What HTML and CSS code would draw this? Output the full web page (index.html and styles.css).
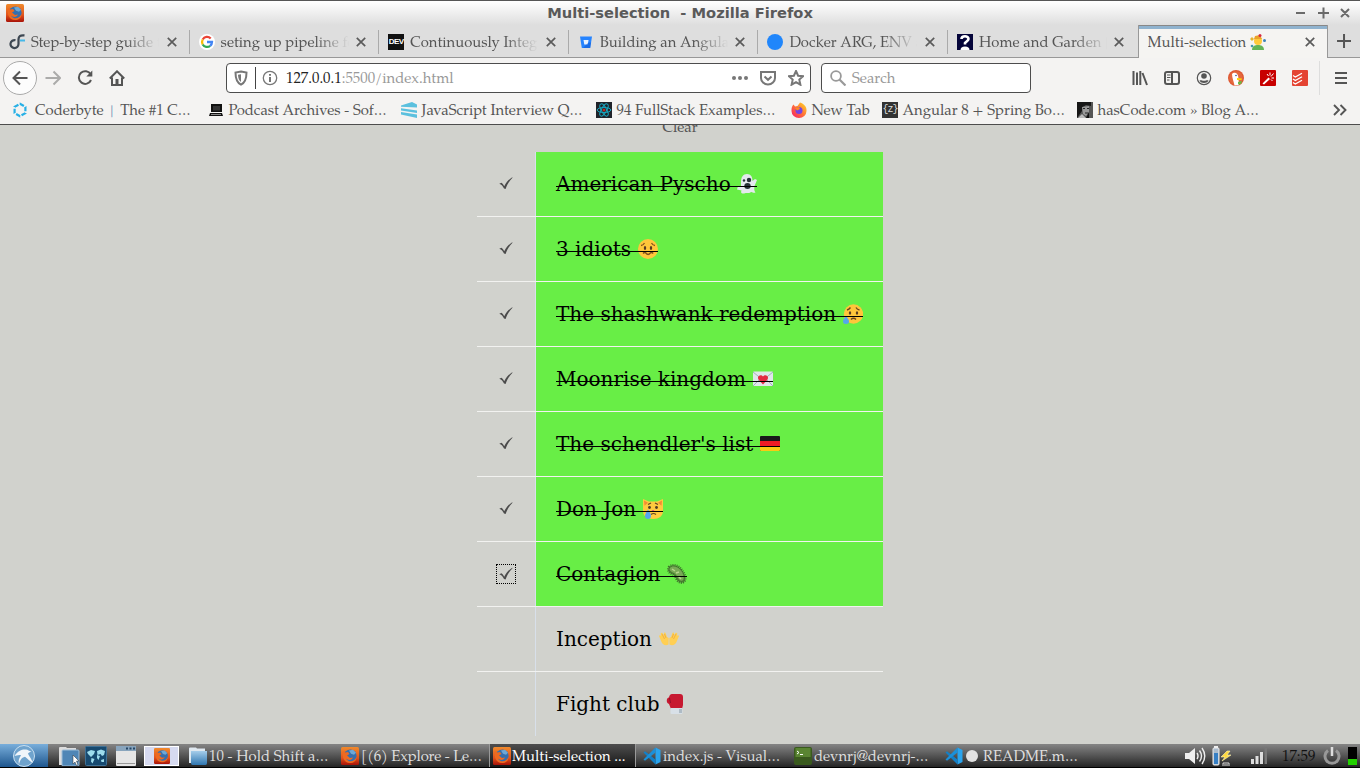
FILE: index.html
```html
<!DOCTYPE html>
<html lang="en">
<head>
<meta charset="utf-8">
<title>Multi-selection</title>
<link rel="stylesheet" href="styles.css">
</head>
<body>
<svg class="defs" width="0" height="0">
  <defs>
    <linearGradient id="ffbg" x2="0" y2="1"><stop offset="0" stop-color="#f08a2c"/><stop offset=".6" stop-color="#e2541c"/><stop offset="1" stop-color="#a81208"/></linearGradient>
    <linearGradient id="blu" x2="0" y2="1"><stop offset="0" stop-color="#a5cdea"/><stop offset="1" stop-color="#2f76b0"/></linearGradient>
    <linearGradient id="ffnew" x1="1" x2="0" y2="1"><stop offset="0" stop-color="#ffe226"/><stop offset=".5" stop-color="#ff7139"/><stop offset="1" stop-color="#f5156c"/></linearGradient>
  </defs>
  <symbol id="fox" viewBox="0 0 18 18"><rect width="18" height="18" rx="1.5" fill="url(#ffbg)"/><circle cx="9.3" cy="8.8" r="6.3" fill="#356fae"/><path d="M8 3.5l4-.8 3 3-2 2-3-1z" fill="#6da8d6"/><path d="M2 4l2 1.500L7 5l1.500 2L6 8.500l3 2.500 3-.5c-1 3-5 3-7 1 2 4 8 4 10.500-1.500 0 4-3 6-6.500 6C3 16 .8 10 2 4z" fill="#ee6a20"/></symbol>
  <symbol id="x" viewBox="0 0 10 10"><path d="M.8.8l8.400 8.400M9.200.8L.8 9.200" stroke="#5b5b5b" stroke-width="1.700"/></symbol>
  <symbol id="tick" viewBox="0 0 14 13"><path d="M.3 6.800l2.200-1c1.200.8 2 2 2.700 3.400C7.300 5.500 9.800 2.300 13.200.2l.3.6C10.500 3.600 8 7.500 6.600 12L5 11.600C4 9.300 2.500 7.500.3 6.800z" fill="#4b4b4b"/></symbol>
  <symbol id="vs" viewBox="0 0 18 18"><path d="M12.500.5L17.500 3v12l-5 2.500z" fill="#29a4ee"/><path d="M.5 5.500L2 4.300l10.500 8.200v5z" fill="#1280c8"/><path d="M.5 12.500L2 13.700 12.500 5.500v-5z" fill="#1a90da"/></symbol>
</svg>

<header class="titlebar">
  <svg class="i18"><use href="#fox"/></svg>
  <h1 class="window-title">Multi-selection&nbsp; - Mozilla Firefox</h1>
  <svg class="winbtns" viewBox="0 0 56 12"><path d="M1 6h9M23 6h11M28.500.5v11M46 2l8 8M54 2l-8 8" stroke="#6a6a6a" stroke-width="2" fill="none"/></svg>
</header>

<nav class="tabs">
  <div class="tab"><svg class="i16" viewBox="0 0 16 16"><path d="M9.500 4.500V10a4 4 0 1 1-3-3.800M9.500 6c0-4 1.500-5 6-4.600" fill="none" stroke="#3d4752" stroke-width="2.200"/><path d="M11 6.500h5" stroke="#45b8e8" stroke-width="2"/></svg><span class="label">Step-by-step guide t</span><svg class="close"><use href="#x"/></svg></div>
  <div class="tab"><svg class="i16" viewBox="0 0 16 16"><circle cx="8" cy="8" r="8" fill="#fff"/><g fill="none" stroke-width="2.300"><path d="M3.700 5.500A5 5 0 0 1 11.700 4.500" stroke="#ea4335"/><path d="M3.700 5.500a5 5 0 0 0 0 5" stroke="#fbbc05"/><path d="M3.700 10.500a5 5 0 0 0 7.500 1.300" stroke="#34a853"/><path d="M8 8h5a5 5 0 0 1-1.800 3.800" stroke="#4285f4"/></g></svg><span class="label">seting up pipeline fo</span><svg class="close"><use href="#x"/></svg></div>
  <div class="tab"><span class="dev">DEV</span><span class="label">Continuously Integr</span><svg class="close"><use href="#x"/></svg></div>
  <div class="tab"><svg class="i16" viewBox="0 0 16 16"><path d="M2 2.500h12l-1.800 11.500H3.800z" fill="#2684ff"/><path d="M5.500 6h5l-.7 4.500H6.300z" fill="#e8f2ff"/><path d="M10.500 8.500h2.600l-.9 5.500H5z" fill="#0b55cf" opacity=".5"/></svg><span class="label">Building an Angula</span><svg class="close"><use href="#x"/></svg></div>
  <div class="tab"><svg class="i16" viewBox="0 0 16 16"><circle cx="8" cy="8" r="8" fill="#2086fb"/></svg><span class="label">Docker ARG, ENV a</span><svg class="close"><use href="#x"/></svg></div>
  <div class="tab last"><svg class="i16" viewBox="0 0 16 16"><rect width="16" height="16" fill="#05053a"/><path d="M4.500 5C4.500 3 6 2.200 8 2.200s3.500 1 3.500 2.800-2.500 2.500-3.500 4v1.500" fill="none" stroke="#fff" stroke-width="2.600"/><path d="M3.500 16a4.500 3.500 0 0 1 9 0" fill="#fff"/></svg><span class="label">Home and Garden |</span><svg class="close"><use href="#x"/></svg></div>
  <div class="tab active"><span class="label">Multi-selection</span><svg class="i16" viewBox="0 0 16 16"><path d="M2 16c0-4 3-5 6-5s6 1 6 5z" fill="#64b457"/><circle cx="8" cy="7" r="4" fill="#ffca3b"/><path d="M4 5l1-3 5-1 2 4z" fill="#eba32b"/><circle cx="10" cy="1.500" r="1.500" fill="#d82940"/><path d="M0 5l2-2 2 2-2 2z" fill="#e3b62f"/><circle cx="14.500" cy="6.500" r="1.500" fill="#3d82b7"/><circle cx="2" cy="12" r="1.300" fill="#4698ad"/></svg><svg class="close"><use href="#x"/></svg></div>
  <svg class="plus" viewBox="0 0 14 14"><path d="M7 0v14M0 7h14" stroke="#555" stroke-width="2"/></svg>
</nav>

<div class="toolbar">
  <div class="navbtns">
    <span class="back"><svg class="i16" viewBox="0 0 16 16"><path d="M15.500 8H1.500M8 1.500L1.500 8 8 14.500" class="ln"/></svg></span>
    <svg class="i16 dim" viewBox="0 0 16 16"><path d="M.5 8h14M8.500 1.500L15 8l-6.500 6.500" class="ln"/></svg>
    <svg class="i16" viewBox="0 0 16 16"><path d="M13.700 4.500A6.300 6.300 0 1 0 14 10" class="ln"/><path d="M15.300.5v6H9.300z" fill="#555"/></svg>
    <svg class="i16" viewBox="0 0 16 16"><path d="M.8 8.500L8 1.300l7.200 7.200M3 7.500V15h10V7.500" class="ln"/><path d="M6.500 9h3v6h-3z" fill="#555"/></svg>
  </div>
  <div class="url">
    <svg class="i16" viewBox="0 0 16 16"><path d="M8 1.500L13.500 2.500c0 6-1 10-5.500 12.200C3.500 12.500 2.500 8.500 2.500 2.500z" class="ln g"/><path d="M8 4.300v7.700C6 10.500 5.200 8.500 5 4.800z" fill="#777"/></svg>
    <i class="vline"></i>
    <svg class="i16 info" viewBox="0 0 16 16"><circle cx="8" cy="8" r="6.700" fill="none" stroke="#777" stroke-width="1.300"/><path d="M8 7v5M8 4v1.700" stroke="#666" stroke-width="1.800"/></svg>
    <span class="address"><b>127.0.0.1</b>:5500/index.html</span>
    <svg class="i16" viewBox="0 0 16 16"><g fill="#777"><circle cx="2" cy="8" r="2"/><circle cx="8" cy="8" r="2"/><circle cx="14" cy="8" r="2"/></g></svg>
    <svg class="i16" viewBox="0 0 16 16"><path d="M1 2h14v6a7 6.500 0 0 1-14 0z" class="ln g"/><path d="M4.500 6.500L8 9.800l3.500-3.300" class="ln g"/></svg>
    <svg class="i16" viewBox="0 0 16 16"><path d="M8 1l2.100 4.700 5 .5-3.800 3.400 1.100 5.100L8 12.100l-4.400 2.600 1.100-5.100L.9 6.200l5-.5z" class="ln g"/></svg>
  </div>
  <div class="search"><svg class="i16" viewBox="0 0 16 16"><circle cx="6" cy="6" r="4.900" fill="none" stroke="#999" stroke-width="1.800"/><path d="M9.500 9.500l6 6" stroke="#999" stroke-width="2.200"/></svg><span>Search</span></div>
  <div class="tools">
    <svg class="i16" viewBox="0 0 16 16"><path d="M1.500 1v14M5 2.500V15M8.300 1v14M10.500 3l4.500 12" class="ln"/></svg>
    <svg class="i16" viewBox="0 0 16 16"><rect x="1" y="2" width="14" height="12" rx="2" class="ln"/><path d="M8 2v12" class="ln"/><path d="M3 5h3.500M3 7.500h3.500M3 10h2.500" stroke="#555"/></svg>
    <svg class="i16" viewBox="0 0 16 16"><circle cx="8" cy="8" r="6.700" fill="none" stroke="#555" stroke-width="1.200"/><circle cx="8" cy="6" r="2.800" fill="#555"/><path d="M3.500 10.500c2-.8 2 .3 4.500.3s2.500-1.100 4.500-.3C11.500 12.300 10 13 8 13s-3.500-.7-4.500-2.500z" fill="#555"/></svg>
    <svg class="i16" viewBox="0 0 16 16"><circle cx="8" cy="8" r="8" fill="#de5833"/><circle cx="8" cy="8" r="6.800" fill="#e4683e"/><path d="M4 4c2-2.500 6-1 6.300 3l.7 8.300-4.500.2C6 12 4 8 4 4z" fill="#fff"/><path d="M9 8l5 .5-.5 1.500H9z" fill="#fdd20a"/><path d="M10 12l4-1-1 3-3 .5z" fill="#65bc46"/><circle cx="8" cy="5.500" r=".8" fill="#2d4f8e"/></svg>
    <svg class="i16" viewBox="0 0 16 16"><rect width="16" height="16" rx="1" fill="#c80000"/><path d="M2.500 13.500l6-6 1.500 1.500-6 5.500z" fill="#fff"/><path d="M10 5.500V2.500M11 6.500l2.500-3M11.500 8h2.500M8.500 6L7 4M11 9.500l1.500 1.500" stroke="#fff"/></svg>
    <svg class="i16" viewBox="0 0 16 16"><rect width="16" height="16" rx="1" fill="#e44332"/><path d="M1 5.500L3.300 7 10 3.300M1 9l2.300 1.500L10 6.800M1 12.500L3.300 14 10 10.300" fill="none" stroke="#fff" stroke-width="1.300"/></svg>
  </div>
  <div class="menu"><svg viewBox="0 0 12 12"><path d="M0 1h12M0 6h12M0 11h12" stroke="#555" stroke-width="2"/></svg></div>
</div>

<div class="bookmarks">
  <div class="bm w196"><svg class="i16" viewBox="0 0 16 16"><path d="M8 1.800l5.400 3.100v6.200L8 14.200l-5.400-3.100V4.900z" fill="none" stroke="#27b0e6" stroke-width="2.200" stroke-dasharray="4.500 1.700"/></svg><span>Coderbyte <em>|</em> The #1 C…</span></div>
  <div class="bm w193"><svg class="i16" viewBox="0 0 16 16"><path d="M3 2h11v8H3z" fill="#111"/><path d="M5 4h7v4.500H5z" fill="#333"/><path d="M2 11h12l1 3H1z" fill="#111"/><path d="M3 12.500h10" stroke="#888"/></svg><span>Podcast Archives - Sof…</span></div>
  <div class="bm w195"><svg class="i16" viewBox="0 0 16 16"><path d="M0 3.500L11 0l5 2.500v3L0 4.800zM0 6.300l16 2.200v2.500L0 8.500zM0 10l16 2.500v3.500L0 12.500z" fill="#5bc0de"/></svg><span>JavaScript Interview Q…</span></div>
  <div class="bm w195"><svg class="i16" viewBox="0 0 16 16"><rect width="16" height="16" fill="#20232a"/><g fill="none" stroke="#19a6bf"><ellipse cx="8" cy="8" rx="6.800" ry="2.600"/><ellipse cx="8" cy="8" rx="6.800" ry="2.600" transform="rotate(60 8 8)"/><ellipse cx="8" cy="8" rx="6.800" ry="2.600" transform="rotate(120 8 8)"/></g><circle cx="8" cy="8" r="1.500" fill="#b5302a"/></svg><span>94 FullStack Examples…</span></div>
  <div class="bm w91"><svg class="i16" viewBox="0 0 16 16"><path d="M9 .5c4 1.500 7 4 6.500 8.500a7.500 7 0 0 1-15 0C.4 6 1 4 2.500 2.500L4 4.500 6.500 4z" fill="url(#ffnew)"/><circle cx="8" cy="8.500" r="3.500" fill="#7542e5"/><path d="M4 6l4-1 1 2-3 1.500z" fill="#ff8a1e"/></svg><span>New Tab</span></div>
  <div class="bm w195"><i class="zed">{z}</i><span>Angular 8 + Spring Bo…</span></div>
  <div class="bm grow"><svg class="i16" viewBox="0 0 16 16"><rect width="16" height="16" fill="#555"/><path d="M0 0h5v9L0 16zM3 0h11v4L9 3 4 6z" fill="#161616"/><path d="M5 5l7-1v6l-3 4-3-2z" fill="#999"/><path d="M6 6.500h2M10 6.500h2M8 11h3" stroke="#222"/><path d="M5 12l4 4H1z" fill="#bbb"/><path d="M12 10v6H9z" fill="#111"/></svg><span>hasCode.com » Blog A…</span></div>
  <svg class="more" viewBox="0 0 14 12"><path d="M1 1l5 5-5 5M7.500 1l5 5-5 5" fill="none" stroke="#555" stroke-width="1.900"/></svg>
</div>

<main class="page">
  <div class="clear">Clear</div>
  <ul class="list">
    <li class="done"><span class="cb"><svg class="tick"><use href="#tick"/></svg></span><p><span class="txt">American Pyscho <svg viewBox="0 0 20 20"><path d="M4 8c0-5 2-8 6-8s5.500 3 5.500 7l2.500-2 2 1-2.500 6c-.5 4 0 5 1 6.500-2 1-3-.5-4-.5s-2 1.500-4 1-3 1-5 .5c-1 0-2-1-1-3L0 15.500 1 12l3 .5z" fill="#e4e9ee"/><circle cx="7" cy="6.500" r="1.200" fill="#263238"/><circle cx="12" cy="6" r="2.200" fill="#263238"/><ellipse cx="10.500" cy="12" rx="3.200" ry="3" fill="#263238"/></svg></span></p></li>
    <li class="done"><span class="cb"><svg class="tick"><use href="#tick"/></svg></span><p><span class="txt">3 idiots <svg viewBox="0 0 20 20"><circle cx="10" cy="10" r="10" fill="#ffc63b"/><path d="M3 6.500q2 0 3.500-2.500M17 6.500q-2 0-3.500-2.500M5 14.500q1.700-2 3.400 0t3.400 0 3.400 0" fill="none" stroke="#85501c" stroke-width="1.300"/><ellipse cx="7" cy="9" rx="1.200" ry="2" fill="#593c20"/><ellipse cx="13" cy="9" rx="1.200" ry="2" fill="#593c20"/></svg></span></p></li>
    <li class="done"><span class="cb"><svg class="tick"><use href="#tick"/></svg></span><p><span class="txt">The shashwank redemption <svg viewBox="0 0 20 20"><circle cx="10.500" cy="10" r="9.700" fill="#ffc63b"/><path d="M4 6q2-.5 3.500-2.500M16.500 6Q14 5.500 13 3.500M8 15.500q2.500-2.500 5 0" fill="none" stroke="#6c431e" stroke-width="1.400"/><ellipse cx="7" cy="9" rx="1.200" ry="1.800" fill="#593c20"/><ellipse cx="14" cy="9" rx="1.200" ry="1.800" fill="#593c20"/><path d="M3 12c2 2.500 3 4 3 5.500a3 2.500 0 0 1-6 0C0 16 1 14.500 3 12z" fill="#56a5ed"/></svg></span></p></li>
    <li class="done"><span class="cb"><svg class="tick"><use href="#tick"/></svg></span><p><span class="txt">Moonrise kingdom <svg viewBox="0 0 20 20"><rect y="2.500" width="20" height="14.500" rx="1" fill="#dfe6ea"/><path d="M0 3l10 8L20 3M0 17l7-7M20 17l-7-7" fill="none" stroke="#9fb2bd"/><path d="M10 15.500L5.800 11C3 7 8 4.500 10 7.500 12 4.500 17 7 14.200 11z" fill="#e32a42"/></svg></span></p></li>
    <li class="done"><span class="cb"><svg class="tick"><use href="#tick"/></svg></span><p><span class="txt">The schendler's list <svg viewBox="0 0 20 20"><rect y="2" width="20" height="15" rx="1" fill="#191919"/><path d="M0 7h20v5H0z" fill="#ee1c25"/><path d="M0 12h20v4q0 1-1 1H1q-1 0-1-1z" fill="#f9cb13"/></svg></span></p></li>
    <li class="done"><span class="cb"><svg class="tick"><use href="#tick"/></svg></span><p><span class="txt">Don Jon <svg viewBox="0 0 20 20"><path d="M0 0l6 2.500h8L20 0v12c0 5-4 8-10 8S0 17 0 12z" fill="#ffca3f"/><path d="M1 1.500l4 2.300-3.500 3zM19 1.500l-4 2.300 3.500 3z" fill="#f38b35"/><path d="M5 5.500L8 4M15 5.500L12 4M8 15.500q2.500-2 5 0" fill="none" stroke="#654321" stroke-width="1.200"/><circle cx="6.500" cy="8.500" r="1.400" fill="#4d3b24"/><circle cx="13.500" cy="8.500" r="1.400" fill="#4d3b24"/><path d="M8.500 11h3L10 13z" fill="#e35a76"/><path d="M5 10.500c2 3 3 5 3 6.500a3 3 0 0 1-6 0c0-1.500 1-3.500 3-6.500z" fill="#56a5ed"/></svg></span></p></li>
    <li class="done"><span class="cb focus"><svg class="tick"><use href="#tick"/></svg></span><p><span class="txt">Contagion <svg viewBox="0 0 20 20"><path d="M2 3c3-3 8-2 11 1s6 8 5 12-6 3-8 0-2-5-5-6-5-4-3-7z" fill="#4f8436" stroke="#3e6e2d" stroke-width="2.500" stroke-dasharray=".9 1.100"/><path d="M3 4c3-3 7-1 9.500 1s5 7 4 10-4 1.500-5.500-1-2-4.500-5-5.500-4-3-3-4.500z" fill="#78aa55"/><path d="M5 5l3 2M12 13l2 2M9 9l3-1" stroke="#b8d38e" stroke-width="1.500"/></svg></span></p></li>
    <li><span class="cb"></span><p><span class="txt">Inception <svg viewBox="0 0 20 20"><path d="M9.500 15.500c-3 2-6 0-7-2.500L0 7l1-1 1 1-.3-3 1.500-.2L5 6V3.500l1.500.2L8 8l1.700 1zM10.500 15.500c3 2 6 0 7-2.500L20 7l-1-1-1 1 .3-3-1.500-.2L15 6V3.500l-1.500.2L12 8l-1.700 1z" fill="#ffcf54"/><path d="M3 5l2.500 5M5.500 5L7 9M17 5l-2.500 5M14.500 5L13 9" stroke="#eaa93d" stroke-width=".8"/></svg></span></p></li>
    <li><span class="cb"></span><p><span class="txt">Fight club <svg viewBox="0 0 20 20"><path d="M6 0h8q3 0 3 3v8l-1 4H5l-2-5Q0 9 1 5q1-2 2-1.500Q3.500 0 6 0z" fill="#c71930"/><path d="M4.500 14h12v5q0 1-1 1h-10q-1 0-1-1z" fill="#d8e0e7"/><path d="M13 15h3v4h-3z" fill="#aebbc5"/><path d="M3.500 4l1 5" stroke="#92102a"/></svg></span></p></li>
  </ul>
</main>

<footer class="taskbar">
  <div class="start"><svg viewBox="0 0 22 22"><circle cx="11" cy="11" r="10.500" fill="#6fa3cd" stroke="#c8dff0"/><path d="M1.500 11C5 5 10 4 13 4.500c2 .3 3 1.500 5.500 2.200-2 .5-3 .8-3.500 2 2 3.300 3.500 6 5 9-3-1-5-4-8-6-4 1-5 4-6 7.500-1-3 0-6 2-9-3-.5-5 .8-6.500.8z" fill="#f0f5fa"/></svg></div>
  <svg class="q q1" viewBox="0 0 22 20"><path d="M1 2q0-1 1-1h6l1 1h9v17H1z" fill="#dcdcdc"/><rect x="4" y="4" width="17" height="16" rx="1" fill="#4f86b6" stroke="#9dbdd8"/><path d="M15 9v9l2-2 1.500 3.500 1.500-.8L18.500 15h2.500z" fill="#fff" stroke="#333" stroke-width=".5"/></svg>
  <svg class="q q2" viewBox="0 0 22 20"><rect x=".5" y=".5" width="21" height="19" rx="1" fill="#174a70" stroke="#3f7196"/><path d="M2 6l4-2 4 1-1 3-3 3-3-3zM12 5l4-1.500 4 1.500-1 4-2 1-1.500-2-3 1zM6.500 12l3 1-2 4.500-1.500-2zM12 9l3 1-1.500 4-1.500-2zM16 14l3-1v3h-2.500z" fill="#9edcec"/></svg>
  <svg class="q q3" viewBox="0 0 22 20"><rect x="1" width="20" height="20" rx="1" fill="#e5e5e5"/><rect x="1" width="20" height="5" fill="#89a5bd"/><path d="M11 2.500h2M14.500 2.500h2M18 2.500h2" stroke="#254667" stroke-width="2"/><path d="M2 17.500h18" stroke="#999"/></svg>
  <div class="hi"><svg class="i16"><use href="#fox"/></svg></div>
  <div class="task f1"><svg viewBox="0 0 18 18"><path d="M0 1.500q0-1 1-1h6l1 1h8V16H0z" fill="#dfe8ef"/><path d="M2 4h16v12q0 2-1.500 2H3.500Q2 18 2 16z" fill="url(#blu)"/></svg><span>10 - Hold Shift a…</span></div>
  <div class="task f2"><svg><use href="#fox"/></svg><span>[(6) Explore - Le…</span></div>
  <div class="task f3"><svg><use href="#fox"/></svg><span>Multi-selection ...</span></div>
  <div class="task f4"><svg><use href="#vs"/></svg><span>index.js - Visual…</span></div>
  <div class="task f5"><svg viewBox="0 0 18 18"><rect width="18" height="18" rx="2" fill="#3a5a1e"/><rect x="1.500" y="1" width="15" height="9" fill="#5a8532"/><path d="M3 4l2 1.500L3 7M6 7.500h3" stroke="#fff" fill="none"/></svg><span>devnrj@devnrj-…</span></div>
  <div class="task f6"><svg><use href="#vs"/></svg><i class="dot"></i><span>README.m…</span></div>
  <div class="tray">
    <svg class="s1" viewBox="0 0 21 18"><path d="M0 6h4l6-5v16l-6-5H0z" fill="#eee"/><path d="M12 6q2 3 0 6M14.500 3.500q4 5.500 0 11M17 1q5.500 8 0 16" fill="none" stroke="#eee" stroke-width="1.400"/></svg>
    <svg class="s2" viewBox="0 0 20 20"><rect x="1" y="2" width="6" height="17" rx="1" fill="#abc" stroke="#eee"/><path d="M2 0h4v2H2z" fill="#eee"/><path d="M2 7h4v11H2z" fill="#367fc4"/><path d="M15 5l-6 6h4l-3 4 9-6h-4l3-4z" fill="#ffd940" stroke="#fff5b5" stroke-width=".6"/><path d="M11 20v-3h6v3M13 18v2M15 18v2" stroke="#ddd" fill="none"/></svg>
    <svg class="s3" viewBox="0 0 17 16"><path d="M0 11h3v5H0zM4.500 8h3v8h-3zM9 4h3v12H9z" fill="#ddd"/><path d="M13.500 0H16v16h-2.500z" fill="#777"/></svg>
    <time>17:59</time>
    <svg class="s4" viewBox="0 0 18 18"><path d="M5 3.500a7 7 0 1 0 8 0" fill="none" stroke="#999" stroke-width="3"/><path d="M9 0v9" stroke="#ddd" stroke-width="2.500"/></svg>
    <i class="cpu"></i>
  </div>
</footer>
</body>
</html>
```
FILE: styles.css
```css
* { box-sizing: border-box; }
body {
  margin: 0; width: 1360px; height: 768px; overflow: hidden;
  display: flex; flex-direction: column;
  font: 14.85px/20px "TeX Gyre Pagella", "Palatino Linotype", "Liberation Serif", serif;
  color: #555; background: #d1d2cd; white-space: nowrap;
}
svg { display: block; flex: none; }
.defs { position: absolute; }
.i16 { width: 16px; height: 16px; }
.i18 { width: 18px; height: 18px; }
.ln { fill: none; stroke: #555; stroke-width: 2; }
.g { stroke: #777; }

.titlebar { height: 25px; flex: none; display: flex; align-items: center; padding: 0 9px 0 6px; border-top: 1px solid #555; background: linear-gradient(#fff, #dedede); }
.window-title { flex: 1; margin: 0; padding-left: 41px; text-align: center; font: bold 14.67px/20px "DejaVu Sans", sans-serif; color: #5a5a5a; }
.winbtns { width: 56px; height: 12px; }

.tabs { height: 33px; flex: none; display: flex; background: #dedede; }
.tab { width: 189.6px; height: 33px; padding: 2px 0 0 9px; display: flex; align-items: center; border-bottom: 1px solid #989898; position: relative; flex: none; }
.tab::after { content: ""; position: absolute; right: 0; top: 5px; width: 1px; height: 24px; background: #aaa; }
.tab.last::after, .tab.active::after { display: none; }
.tab .label { width: 132px; margin: 0 4.500px 0 5px; padding: 3px 0 0 1px; overflow: hidden; -webkit-mask-image: linear-gradient(90deg, #000 72%, transparent 98%); mask-image: linear-gradient(90deg, #000 72%, transparent 98%); }
.close { width: 10px; height: 10px; }
.tab.active { width: 190.4px; padding-top: 1px; background: #f5f4f2; border: 1px solid #989898; border-width: 0 1px; padding-right: 12px; }
.tab.active::before { content: ""; position: absolute; left: 0; right: 0; top: 0; height: 3px; background: #90b3cf; border-top: 1px solid #888; }
.tab.active .label { width: auto; margin: 0 4px 0 0; padding-left: 0; -webkit-mask: none; mask: none; }
.tab.active .close { margin-left: auto; }
.plus { width: 32px; height: 33px; padding: 9px; border-bottom: 1px solid #989898; flex: 1; }
.dev { width: 16px; height: 16px; background: #111; color: #fff; font: bold 8px/16px "Liberation Sans Narrow", "Liberation Sans", sans-serif; letter-spacing: -.5px; text-align: center; }

.toolbar { height: 40px; flex: none; display: flex; align-items: center; background: #f4f3f2; }
.navbtns { width: 226px; padding-left: 3px; display: flex; align-items: center; gap: 16px; }
.back { width: 34px; height: 34px; border: 1px solid #aaa; border-radius: 50%; background: #fcfcfc; display: grid; place-items: center; margin-right: -8px; }
.dim { opacity: .45; }
.url, .search { height: 30px; border: 1px solid #4d4d4d; border-radius: 4px; background: #fff; display: flex; align-items: center; }
.url { width: 585px; padding: 0 6px; gap: 12px; }
.vline { width: 1px; height: 22px; background: #444; margin-left: -6px; }
.info { margin-left: -6px; }
.address { flex: 1; margin-left: -4px; padding-top: 3px; color: #999; }
.address b { font-weight: normal; color: #222; }
.search { width: 210px; margin-left: 10px; padding-left: 8px; gap: 6px; color: #999; }
.search span { padding-top: 3px; }
.tools { display: flex; gap: 16px; margin-left: 101px; }
.menu { margin-left: 11px; border-left: 1px solid #ddd; height: 34px; padding: 11px 0 0 15px; }
.menu svg { width: 12px; height: 12px; }

.bookmarks { height: 27px; flex: none; display: flex; align-items: center; padding: 0 13px 2px 12px; background: #f4f3f2; border-bottom: 1px solid #4d4d4d; }
.bm { display: flex; align-items: center; gap: 4.5px; }
.bm span { padding-top: 4px; }
.bm:first-child { gap: 7px; }
.bm em { margin: 0 3px; color: #5b88ac; font-style: normal; }
.w196 { width: 196px; } .w193 { width: 193px; } .w195 { width: 195px; } .w91 { width: 91px; } .grow { flex: 1; }
.zed { width: 16px; height: 16px; background: #333; color: #ddd; font: 10px/15px "Liberation Mono", monospace; letter-spacing: -1px; text-align: center; }
.more { width: 14px; height: 12px; }

.page { flex: 1; min-height: 0; overflow: hidden; }
.clear { height: 27px; text-align: center; line-height: 7px; }
.list { width: 406px; margin: 0 auto; padding: 0; list-style: none; font: 20px/24px "DejaVu Serif", serif; color: #000; }
.list li { height: 65px; display: flex; border-bottom: 1px solid #f2f2f0; }
.list li:last-child { border-color: transparent; }
.cb { width: 58px; display: grid; place-items: center; }
.tick { width: 14px; height: 13px; margin: 0 1px 1px 0; }
.list p { flex: 1; margin: 0; padding: 0 20px; border-left: 1px solid #d8e0ea; display: flex; align-items: center; }
.done p { background: #68ee46; }
.txt { position: relative; display: flex; align-items: center; white-space: pre; }
.txt svg { width: 20px; height: 20px; margin-left: .3px; }
.done .txt::after { content: ""; position: absolute; left: 0; right: 0; top: 14px; height: 1px; background: #000; }
.focus .tick { width: 20px; height: 20px; padding: 3px; margin: 0; outline: 1px dotted #000; outline-offset: -1px; }

.taskbar { height: 24px; flex: none; display: flex; align-items: center; background: linear-gradient(#858585, #252525); border-bottom: 1px solid #000; color: #ddd; }
.start { width: 48px; height: 23px; display: grid; place-items: center; background: linear-gradient(#78aedb, #1e568e); }
.start svg { width: 22px; height: 22px; }
.q { width: 22px; height: 20px; }
.q1 { margin-left: 10px; } .q2 { margin-left: 5px; } .q3 { margin-left: 8px; }
.hi { width: 35px; height: 20px; margin: 0 10px 0 7px; display: grid; place-items: center; background: #d6daf0; border: 1px solid #fff; }
.task { display: flex; align-items: center; height: 23px; gap: 2px; }
.task svg { width: 18px; height: 18px; }
.task span { padding-top: 4px; }
.f1 { width: 152px; } .f2 { width: 148px; }
.f2 span { letter-spacing: -.15px; }
.f3 { width: 147px; padding-left: 3px; gap: 1px; border-left: 1px solid #999; border-right: 1px solid #999; background: linear-gradient(#4e4e4e, #161616); color: #fff; }
.f3 span { padding-top: 5px; }
.f4 { width: 158px; padding-left: 7px; } .f5 { width: 151px; } .f6 { width: 240px; }
.dot { width: 12px; height: 12px; border-radius: 50%; background: #e2e2e2; margin: 0 3px 0 1px; }
.tray { display: flex; align-items: center; }
.s1 { width: 21px; height: 18px; } .s2 { width: 20px; height: 20px; margin-left: 6px; } .s3 { width: 17px; height: 16px; margin-left: 19px; }
time { width: 41px; margin-left: 14px; margin-right: 1px; margin-right: 0; padding-top: 4px; color: #111; }
.s4 { width: 18px; height: 18px; } .cpu { width: 9px; height: 18px; margin-left: 7px; background: linear-gradient(#000 65%, #23d000 65%); }
```
